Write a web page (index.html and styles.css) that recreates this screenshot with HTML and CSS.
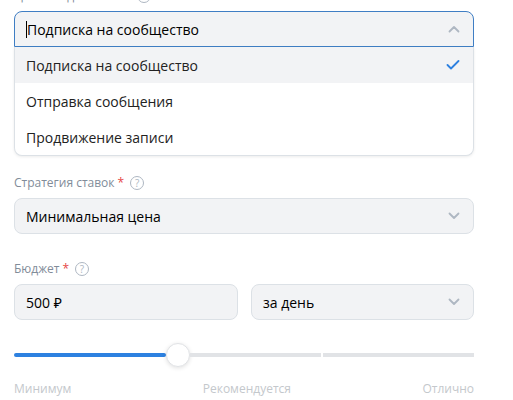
FILE: index.html
```html
<!DOCTYPE html>
<html lang="ru">
<head>
<meta charset="utf-8">
<link rel="stylesheet" href="styles.css">
</head>
<body>
<div class="form">
  <div class="field first">
    <div class="label">Целевое действие <span class="req">*</span> <span class="help">?</span></div>
    <div class="select-wrap">
      <div class="select open">
        <span class="value"><span class="caret"></span>Подписка на сообщество</span>
        <svg class="chev" width="12" height="8" viewBox="0 0 12 8"><path d="M1.5 6.5 6 2l4.5 4.5" fill="none" stroke="#aeb7c2" stroke-width="1.8" stroke-linecap="round" stroke-linejoin="round"/></svg>
      </div>
      <div class="menu">
        <div class="item active"><span>Подписка на сообщество</span>
          <svg width="14" height="10" viewBox="0 0 14 10"><path d="M1.5 5 5 8.5l7.5-7.5" fill="none" stroke="#2d81e0" stroke-width="1.8" stroke-linecap="round" stroke-linejoin="round"/></svg>
        </div>
        <div class="item"><span>Отправка сообщения</span></div>
        <div class="item"><span>Продвижение записи</span></div>
      </div>
    </div>
  </div>

  <div class="field">
    <div class="label">Стратегия ставок <span class="req">*</span> <span class="help">?</span></div>
    <div class="select">
      <span class="value">Минимальная цена</span>
      <svg class="chev" width="12" height="8" viewBox="0 0 12 8"><path d="M1.5 1.5 6 6l4.5-4.5" fill="none" stroke="#aeb7c2" stroke-width="1.8" stroke-linecap="round" stroke-linejoin="round"/></svg>
    </div>
  </div>

  <div class="field last">
    <div class="label">Бюджет <span class="req">*</span> <span class="help">?</span></div>
    <div class="row">
      <div class="select"><span class="value">500 ₽</span></div>
      <div class="select">
        <span class="value">за день</span>
        <svg class="chev" width="12" height="8" viewBox="0 0 12 8"><path d="M1.5 1.5 6 6l4.5-4.5" fill="none" stroke="#aeb7c2" stroke-width="1.8" stroke-linecap="round" stroke-linejoin="round"/></svg>
      </div>
    </div>
  </div>

  <div class="slider">
    <div class="track">
      <div class="fill"></div>
      <div class="thumb"></div>
      <div class="rest a"></div>
      <div class="rest b"></div>
    </div>
    <div class="marks">
      <span>Минимум</span>
      <span>Рекомендуется</span>
      <span>Отлично</span>
    </div>
  </div>
</div>
</body>
</html>
```

FILE: styles.css
```css
* { box-sizing: border-box; }
html, body { margin: 0; padding: 0; background: #fff; }
body {
  font-family: "Open Sans", "Noto Sans", sans-serif;
  color: #000;
  overflow: hidden;
  height: 400px;
}
.form {
  width: 460px;
  margin: -13px 0 0 14px;
  display: flex;
  flex-direction: column;
}
.field { margin-bottom: 26px; }
.field.first { margin-bottom: 18px; }
.field.last { margin-bottom: 23px; }
.label {
  font-size: 12px;
  line-height: 18px;
  color: #818c99;
  margin-bottom: 6px;
  display: flex;
  align-items: center;
  gap: 3px;
}
.req { color: #e64646; }
.help {
  display: inline-flex;
  align-items: center;
  justify-content: center;
  width: 14px;
  height: 14px;
  border: 1.3px solid #aeb7c2;
  border-radius: 50%;
  font-size: 10px;
  line-height: 1;
  color: #aeb7c2;
  margin-left: 3px;
}
.select-wrap { position: relative; }
.select {
  height: 36px;
  background: #f2f3f5;
  border: 1px solid #dce1e6;
  border-radius: 8px;
  display: flex;
  align-items: center;
  justify-content: space-between;
  padding: 0 12px 0 11px;
  font-size: 14px;
}
.select .chev { margin-right: 1px; }
.select.open {
  border-color: #3f7ec4;
  border-radius: 8px 8px 0 0;
}
.value { display: flex; align-items: center; }
.caret {
  display: inline-block;
  width: 1px;
  height: 17px;
  background: #000;
  margin-right: 0;
}
.menu {
  background: #fff;
  border: 1px solid #dce1e6;
  border-top: none;
  border-radius: 0 0 8px 8px;
  box-shadow: 0 1px 3px rgba(0,0,0,0.08);
  overflow: hidden;
}
.item {
  height: 36px;
  display: flex;
  align-items: center;
  justify-content: space-between;
  padding: 0 13px 0 11px;
  font-size: 14px;
  color: #222;
}
.item.active { background: #f2f3f5; }
.row {
  display: grid;
  grid-template-columns: 224px 1fr;
  gap: 13px;
}
.track {
  height: 24px;
  display: flex;
  align-items: center;
}
.fill {
  width: 152px;
  height: 4px;
  background: #2d81e0;
  border-radius: 2px;
}
.thumb {
  width: 24px;
  height: 24px;
  border-radius: 50%;
  background: #fff;
  border: 1px solid #e1e3e6;
  box-shadow: 0 1px 4px rgba(0,0,0,0.12);
  flex: none;
}
.rest {
  height: 4px;
  background: #e1e3e6;
}
.rest.a { width: 131px; }
.rest.b { flex: 1; margin-left: 2px; }
.marks {
  display: flex;
  justify-content: space-between;
  margin-top: 13px;
  font-size: 12px;
  line-height: 18px;
  color: #c4c8cc;
}
```
